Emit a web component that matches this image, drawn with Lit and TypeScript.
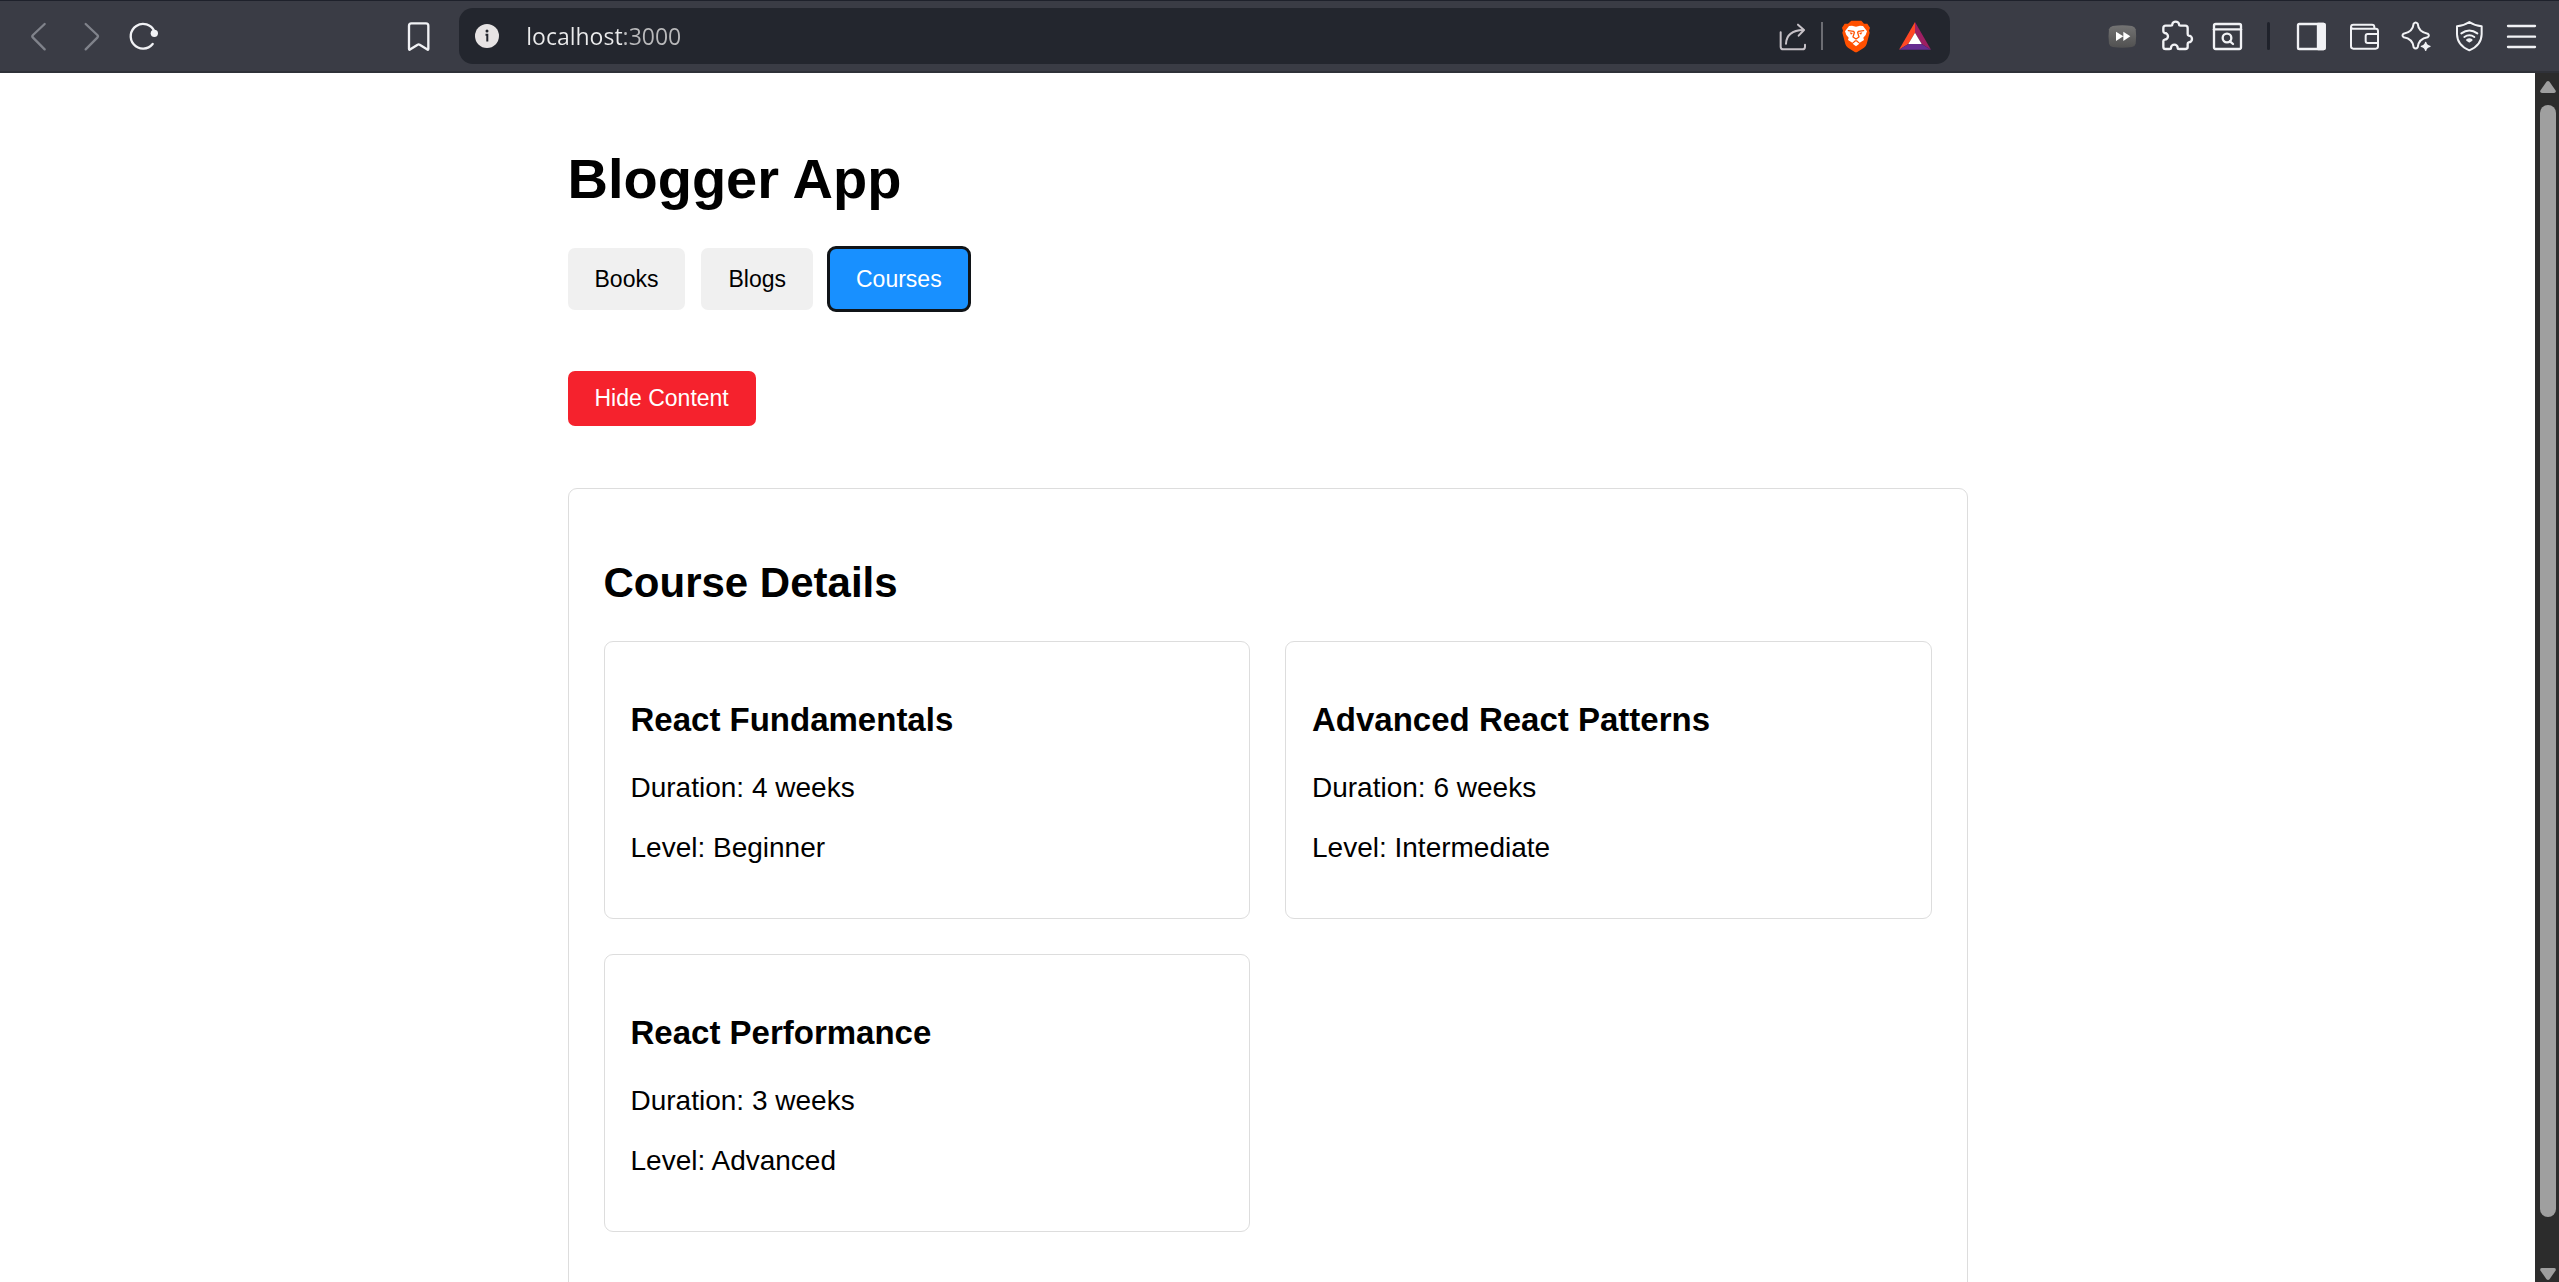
import { LitElement, html, css, svg, nothing, type SVGTemplateResult } from "lit";
import { customElement, property, state } from "lit/decorators.js";
import { classMap } from "lit/directives/class-map.js";

const icons: Record<string, SVGTemplateResult> = {
  back: svg`<path class="dim" d="M62 9 L27 42 Q23 46 27 50 L62 85"/>`,
  forward: svg`<path class="dim" d="M29 9 L64 42 Q68 46 64 50 L29 85"/>`,
  reload: svg`<path d="M74 69 A37 37 0 1 1 79 31"/><circle class="solid plain" cx="79" cy="37" r="11"/>`,
  bookmark: svg`<path d="M15 83 V14 Q15 7 22 7 H66 Q73 7 73 14 V83 Q73 88 69 85 L47 71 Q44 69 41 71 L19 85 Q15 88 15 83 Z"/>`,
  share: svg`<g class="muted"><path d="M8 34 V77 Q8 85 16 85 H73 Q81 85 81 77 V71"/><path d="M24 68 C25 44 40 28 76 27"/><path d="M60 11 L78 27 L62 44"/></g>`,
  brave: svg`
    <path fill="#ff5000" d="M31 -1 H61 L69 8 L79 8 L87 20 L84 29 L86 35 L77 69 Q75 76 69 80 L50 92 Q45 95 40 92 L21 80 Q15 76 13 69 L4 35 L6 29 L3 20 L11 8 L21 8 Z"/>
    <path fill="#fff" d="M45 17 L57 14 L66 15 L78 31 L74 42 L67 50 L69 57 L56 65 L48 58 L42 58 L34 65 L21 57 L23 50 L16 42 L12 31 L24 15 L33 14 Z"/>
    <path fill="#fff" d="M45 61 L55 68 L45 76 L35 68 Z"/>
    <path fill="none" stroke="#ff5000" stroke-width="4" d="M22 29 L38 31 L40 35 L36 48 L45 54 L54 48 L50 35 L52 31 L68 29"/>
    <path fill="#ff5000" d="M26 34 L36 36 L30 41 Z M64 34 L54 36 L60 41 Z"/>`,
  rewards: svg`
    <path fill="#ff4724" d="M45 3 V35 L25 69 L-3 86 Z"/>
    <path fill="#9e1f63" d="M45 3 L93 86 L65 69 L45 35 Z"/>
    <path fill="#662d91" d="M-3 86 L25 69 H65 L93 86 Z"/>
    <path fill="#fff" d="M45 35 L65 69 H25 Z"/>`,
  skip: svg`
    <defs><linearGradient id="g" x1="0" y1="0" x2="0" y2="1"><stop offset="0" stop-color="#747474"/><stop offset="1" stop-color="#505050"/></linearGradient></defs>
    <path fill="url(#g)" d="M14 15 Q43 10 72 15 Q81 17 83 25 Q86 46 83 68 Q81 76 72 78 Q43 83 14 78 Q5 76 3 68 Q0 46 3 25 Q5 17 14 15 Z"/>
    <path fill="#fff" d="M24 32 L46 46 L24 60 Z M46 32 L67 46 L46 60 Z"/>`,
  puzzle: svg`<path d="M17 14 H32 Q37 14 37 10 A10 8 0 0 1 57 10 Q57 14 62 14 H76 Q83 14 83 21 V39 Q83 43 86 44 A10 10 0 0 1 86 64 Q83 65 83 69 V78 Q83 84 76 84 H58 Q53 84 53 80 A10 9 0 0 0 33 80 Q33 84 28 84 H17 Q10 84 10 77 V60 Q10 57 14 56 A10 10 0 0 0 14 36 Q10 35 10 31 V21 Q10 14 17 14 Z"/>`,
  search: svg`<rect x="6" y="9" width="81" height="75" rx="5"/><path d="M6 25 H87"/><circle cx="45" cy="51" r="13"/><path d="M54 61 L63 69"/>`,
  sidebar: svg`<rect x="9" y="9" width="80" height="75" rx="4"/><path class="solid" d="M69 9 H86 Q89 9 89 12 V81 Q89 84 86 84 H69 Z"/>`,
  wallet: svg`<path class="fine" d="M9 18 Q9 11 16 11 H72 Q79 11 79 18 V22 M9 18 Q9 23 16 23 H83 Q90 23 90 30 V76 Q90 83 83 83 H16 Q9 83 9 76 Z M90 39 H59 Q53 39 53 45 V60 Q53 66 59 66 H90"/>`,
  sparkle: svg`<path class="fine" d="M38 8 Q44 1 50 8 C52 27 61 35 80 38 Q87 43 80 49 C61 52 52 61 50 79 Q44 86 38 79 C36 61 27 52 8 49 Q1 43 8 38 C27 35 36 27 38 8 Z"/><path class="tip" d="M74 64 Q76 74 87 76 Q76 78 74 88 Q72 78 61 76 Q72 74 74 64 Z"/>`,
  vpn: svg`<path class="fine" d="M46 3 Q62 14 83 16 V40 Q82 74 46 88 Q10 74 9 40 V16 Q30 14 46 3 Z M22 37 Q46 20 70 37 M31 48 Q46 38 61 48"/><path class="solid" d="M40 57 Q46 53 52 57 L46 61 Z"/>`,
  menu: svg`<path d="M3 15 H84 M3 47 H84 M3 78 H84"/>`,
};

@customElement("icon-button")
class IconButton extends LitElement {
  @property() icon = "menu";
  @property() label = "";

  static styles = css`
    :host { display: block; flex: none; }
    .btn { display: block; width: 30px; height: 30px; padding: 0; border: 0; background: none; cursor: pointer; }
    .art { display: block; width: 30px; height: 30px; overflow: visible; fill: none; stroke-linecap: round; stroke-linejoin: round; }
    .line { stroke: #f1f2f5; stroke-width: 7; }
    .dim { stroke: #80838b; }
    .muted { stroke: #c7c2c8; stroke-width: 6; }
    .fine { stroke-width: 6; }
    .solid { fill: #f1f2f5; }
    .plain { stroke: none; }
    .tip { fill: #f1f2f5; stroke-width: 4; }
  `;

  render() {
    const filled = ["brave", "rewards", "skip"].includes(this.icon);
    return html`<button class="btn" type="button" aria-label=${this.label}>
      <svg class=${classMap({ art: true, line: !filled })} viewBox="0 0 90 90" aria-hidden="true">${icons[this.icon]}</svg>
    </button>`;
  }
}

@customElement("browser-bar")
class BrowserBar extends LitElement {
  static styles = css`
    :host { display: block; flex: none; }
    .bar {
      display: flex; align-items: center; box-sizing: border-box; height: 73px; padding: 0 22px 0 24px;
      background: #3a3c45; border-top: 1px solid #1e212b; border-bottom: 2px solid #2f3138;
    }
    .group { display: flex; align-items: center; gap: 22px; }
    .right { gap: 23px; }
    .lead { flex: 246 1 0; }
    .trail { flex: 158 1 0; }
    .address {
      flex: 1453 1 0; min-width: 0; display: flex; align-items: center; box-sizing: border-box; height: 56px;
      margin-left: 25px; padding: 0 20px 0 16px; border-radius: 14px; background: #23262e;
    }
    .info { flex: none; width: 24px; height: 24px; }
    .url {
      flex: 1; min-width: 0; margin: 0 0 0 27px; padding: 0; border: 0; outline: 0; height: 40px;
      font: 23px/40px "Open Sans", "Noto Sans", sans-serif; color: transparent;
      background: linear-gradient(to right, #ebebec 97px, #b9b9bb 97px); -webkit-background-clip: text; background-clip: text;
      caret-color: #ebebec;
    }
    .rule { width: 2px; height: 28px; margin: 0 18px 0 13px; background: #6c6d73; }
    .rewards { margin-left: 29px; }
    .split { width: 3px; height: 28px; border-radius: 2px; background: #1f222b; margin: 0 2px; }
  `;

  render() {
    return html`<header class="bar">
      <nav class="group" aria-label="History">
        <icon-button icon="back" label="Back"></icon-button>
        <icon-button icon="forward" label="Forward"></icon-button>
        <icon-button icon="reload" label="Reload"></icon-button>
      </nav>
      <div class="lead"></div>
      <icon-button icon="bookmark" label="Bookmark"></icon-button>
      <div class="address">
        <svg class="info" viewBox="0 0 24 24" aria-hidden="true">
          <circle cx="12" cy="12" r="12" fill="#e6e3e4" />
          <circle cx="12" cy="7" r="1.5" fill="#23262e" />
          <path d="M10.5 10.8 H12.3 V17.5" fill="none" stroke="#23262e" stroke-width="2" />
        </svg>
        <input class="url" type="text" aria-label="Address" .value=${"localhost:3000"} spellcheck="false" />
        <icon-button icon="share" label="Share"></icon-button>
        <div class="rule"></div>
        <icon-button icon="brave" label="Shields"></icon-button>
        <icon-button class="rewards" icon="rewards" label="Rewards"></icon-button>
      </div>
      <div class="trail"></div>
      <div class="group right">
        <div class="group">
          <icon-button icon="skip" label="Skip"></icon-button>
          <icon-button icon="puzzle" label="Extensions"></icon-button>
          <icon-button icon="search" label="Search tabs"></icon-button>
        </div>
        <div class="split"></div>
        <icon-button icon="sidebar" label="Sidebar"></icon-button>
        <icon-button icon="wallet" label="Wallet"></icon-button>
        <icon-button icon="sparkle" label="Assistant"></icon-button>
        <icon-button icon="vpn" label="VPN"></icon-button>
        <icon-button icon="menu" label="Menu"></icon-button>
      </div>
    </header>`;
  }
}

interface Course { name: string; weeks: number; level: string; }

const courses: Course[] = [
  { name: "React Fundamentals", weeks: 4, level: "Beginner" },
  { name: "Advanced React Patterns", weeks: 6, level: "Intermediate" },
  { name: "React Performance", weeks: 3, level: "Advanced" },
];

@customElement("app-root")
class AppRoot extends LitElement {
  @state() private tab = "Courses";
  @state() private shown = true;

  static styles = css`
    :host {
      display: flex; flex-direction: column; height: 100vh; overflow: hidden; background: #fff; color: #000;
      font: 28px/32px Arial, "Liberation Sans", sans-serif;
    }
    .body { flex: 1; min-height: 0; display: flex; }
    .page { flex: 1; min-width: 0; overflow-y: auto; scrollbar-width: none; }
    .content { max-width: 1400px; margin: 0 auto; padding: 37px 35px; }
    .title { margin: 37px 0; font-size: 56px; line-height: 64px; }
    .tabs { display: flex; gap: 16px; margin-bottom: 61px; }
    .tab, .toggle {
      border: 0; border-radius: 7px; padding: 0 27px; font: 23px/27px Arial, "Liberation Sans", sans-serif; cursor: pointer;
    }
    .tab { height: 62px; background: #f0f0f0; color: #000; }
    .active { background: #1890ff; color: #fff; outline: 3px solid #101418; outline-offset: -1px; }
    .toggle { height: 55px; background: #f5222d; color: #fff; }
    .panel { margin-top: 62px; padding: 35px; border: 1px solid #ddd; border-radius: 9px; }
    .heading { margin: 35px 0; font-size: 42px; line-height: 47px; }
    .grid { display: grid; grid-template-columns: 1fr 1fr; gap: 35px; margin-bottom: 35px; }
    .card { padding: 26px; border: 1px solid #ddd; border-radius: 9px; }
    .name { margin: 33px 0; font-size: 33px; line-height: 38px; }
    .fact { margin: 28px 0; }
    .scroll {
      flex: none; width: 24px; box-sizing: border-box; padding: 8px 3px 2px 5px; background: #2c2c2c;
      display: flex; flex-direction: column;
    }
    .arrow { flex: none; width: 16px; height: 12px; fill: #9f9f9f; }
    .track { flex: 1; display: flex; flex-direction: column; padding: 12px 0; }
    .thumb { flex: 1112 1 0; border-radius: 8px; background: #9f9f9f; }
    .rest { flex: 39 1 0; }
  `;

  render() {
    return html`
      <browser-bar></browser-bar>
      <div class="body">
        <main class="page">
          <div class="content">
            <h1 class="title">Blogger App</h1>
            <div class="tabs">
              ${["Books", "Blogs", "Courses"].map(
                (t) => html`<button type="button" class=${classMap({ tab: true, active: t === this.tab })}
                  aria-pressed=${t === this.tab} @click=${() => (this.tab = t)}>${t}</button>`
              )}
            </div>
            <button type="button" class="toggle" @click=${() => (this.shown = !this.shown)}>
              ${this.shown ? "Hide Content" : "Show Content"}
            </button>
            ${this.shown
              ? html`<section class="panel">
                  <h2 class="heading">Course Details</h2>
                  <div class="grid">
                    ${courses.map(
                      (c) => html`<article class="card">
                        <h3 class="name">${c.name}</h3>
                        <p class="fact">Duration: ${c.weeks} weeks</p>
                        <p class="fact">Level: ${c.level}</p>
                      </article>`
                    )}
                  </div>
                </section>`
              : nothing}
          </div>
        </main>
        <div class="scroll" aria-hidden="true">
          <svg class="arrow" viewBox="0 0 16 12"><path d="M6.5 .8 Q8 -.6 9.5 .8 L15.6 9.5 Q16.4 12 14 12 H2 Q-.4 12 .4 9.5 Z" /></svg>
          <div class="track"><div class="thumb"></div><div class="rest"></div></div>
          <svg class="arrow" viewBox="0 0 16 12"><path d="M6.5 11.2 Q8 12.6 9.5 11.2 L15.6 2.5 Q16.4 0 14 0 H2 Q-.4 0 .4 2.5 Z" /></svg>
        </div>
      </div>
    `;
  }
}
